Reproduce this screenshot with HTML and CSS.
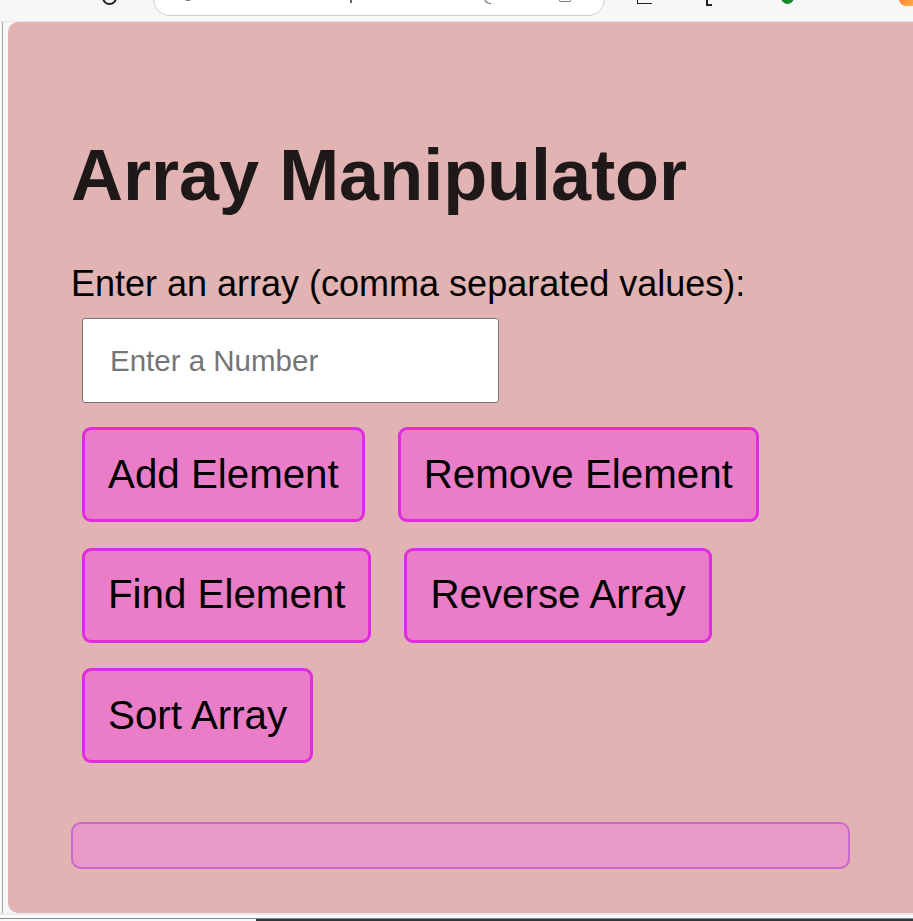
FILE: index.html
```html
<!DOCTYPE html>
<html lang="en">
<head>
<meta charset="utf-8">
<title>Array Manipulator</title>
<link rel="stylesheet" href="styles.css">
</head>
<body>
<div class="chrome">
  <span class="ico reload"></span>
  <div class="omnibox">
    <span class="ico info"></span>
    <span class="ico slash"></span>
    <span class="ico paren"></span>
    <span class="ico star"></span>
  </div>
  <span class="ico split"></span>
  <span class="ico pen"></span>
  <span class="ico ext"></span>
  <span class="ico avatar"></span>
</div>
<div class="viewport">
  <main class="card">
    <h1 class="title">Array Manipulator</h1>
    <label class="label" for="num">Enter an array (comma separated values):</label>
    <input class="field" id="num" type="text" placeholder="Enter a Number">
    <div class="actions">
      <button class="btn">Add Element</button>
      <button class="btn">Remove Element</button>
      <button class="btn">Find Element</button>
      <button class="btn">Reverse Array</button>
      <button class="btn">Sort Array</button>
    </div>
    <div class="result"></div>
  </main>
</div>
<div class="statusbar"><span class="taskbar"></span></div>
</body>
</html>
```

FILE: styles.css
```css
html, body {
  margin: 0;
  padding: 0;
  background: #f7f7f7;
  font-family: "Liberation Sans", Arial, sans-serif;
  overflow: hidden;
}

.chrome {
  position: relative;
  height: 21px;
  border-bottom: 1px solid #e6e6e6;
  background: #f7f7f7;
}

.omnibox {
  position: absolute;
  left: 153px;
  top: -20px;
  width: 450px;
  height: 34px;
  background: #fff;
  border: 1px solid #cfcfcf;
  border-radius: 0 0 17px 17px;
}

.ico { position: absolute; display: block; }
.reload {
  left: 102px; top: -10px; width: 11px; height: 11px;
  border: 2px solid #222; border-radius: 50%;
}
.info {
  left: 28px; top: 8px; width: 10px; height: 10px;
  border: 1.5px solid #666; border-radius: 50%;
}
.slash {
  left: 196px; top: 18px; width: 2px; height: 4px; background: #666;
}
.paren {
  left: 330px; top: 16px; width: 6px; height: 6px;
  border-left: 1.5px solid #777; border-bottom: 1.5px solid #777;
  border-radius: 0 0 0 6px;
}
.star {
  left: 405px; top: 14px; width: 10px; height: 6px;
  border: 1.5px solid #777; border-top: 0; border-radius: 0 0 2px 2px;
}
.split {
  left: 637px; top: 0; width: 14px; height: 3px;
  border-bottom: 1.5px solid #222; border-left: 1.5px solid #222;
}
.pen {
  left: 706px; top: 0; width: 4px; height: 4px;
  border-bottom: 2px solid #222; border-left: 2px solid #222;
}
.ext {
  left: 781px; top: -9px; width: 13px; height: 13px;
  background: #1a8a2a; border-radius: 50%;
}
.avatar {
  left: 899px; top: -8px; width: 14px; height: 14px;
  background: linear-gradient(135deg, #ff6a2a, #ffb14a);
  border-radius: 50% 0 0 50%;
}

.viewport {
  margin-left: 2px;
  border-left: 1px solid #a9a9a9;
  padding-left: 5px;
}

.card {
  box-sizing: border-box;
  height: 891px;
  background: #e1b3b3;
  border-radius: 10px 0 0 10px;
  padding: 64px 64px 44px 63px;
}

.title {
  margin: 48px 0 46px 0;
  font-size: 72px;
  line-height: 83px;
  font-weight: bold;
  color: #1e1818;
}

.label {
  display: block;
  font-size: 36px;
  line-height: 41px;
  color: #000;
}

.field {
  display: block;
  box-sizing: border-box;
  margin: 14px 0 0 11px;
  width: 417px;
  height: 85px;
  border: 1px solid #767676;
  border-radius: 3px;
  background: #fff;
  padding: 0 27px;
  font-family: "Liberation Sans", Arial, sans-serif;
  font-size: 29.5px;
  color: #000;
}
.field::placeholder { color: #757575; }

.actions {
  margin: 24px 0 0 11px;
  display: flex;
  flex-wrap: wrap;
  column-gap: 33px;
  row-gap: 25.5px;
}

.btn {
  box-sizing: border-box;
  height: 95px;
  padding: 0 23px;
  border: 3px solid #e02be0;
  border-radius: 9px;
  background: #ea7dc7;
  color: #000;
  font-family: "Liberation Sans", Arial, sans-serif;
  font-size: 40.3px;
  line-height: 46px;
}

.result {
  box-sizing: border-box;
  margin-top: 59px;
  height: 47px;
  border: 2px solid #c968cf;
  border-radius: 10px;
  background: #e899c6;
  margin-right: -1px;
}

.statusbar {
  height: 8px;
  border-top: 2px solid #ebebeb;
  background: #fafafa;
  position: relative;
}
.statusbar::after {
  content: "";
  position: absolute;
  left: 0; right: 0; top: 3px;
  height: 1px;
  background: #8a8a8a;
}
.taskbar {
  position: absolute;
  left: 256px; right: 0; top: 4px;
  height: 3px;
  background: #333;
}
```
